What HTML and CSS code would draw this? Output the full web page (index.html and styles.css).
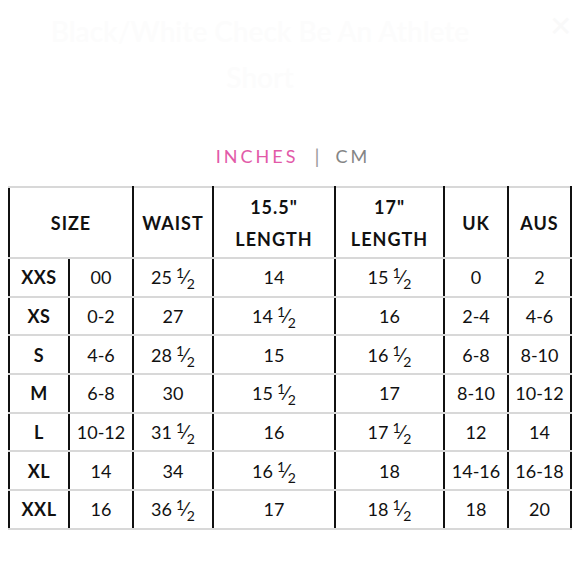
FILE: index.html
```html
<!DOCTYPE html>
<html>
<head>
<meta charset="utf-8">
<link rel="stylesheet" href="styles.css">
</head>
<body>
<div class="page">
  <div class="title">
    <div class="title-text">Black/White Check Be An Athlete<br>Short</div>
    <div class="close">✕</div>
  </div>
  <div class="units">
    <span class="unit active">INCHES</span>
    <span class="sep">|</span>
    <span class="unit">CM</span>
  </div>
  <table class="chart">
    <colgroup>
      <col class="c1"><col class="c2"><col class="c3"><col class="c4"><col class="c5"><col class="c6"><col class="c7">
    </colgroup>
    <thead>
      <tr>
        <th colspan="2">SIZE</th>
        <th>WAIST</th>
        <th>15.5"<br>LENGTH</th>
        <th>17"<br>LENGTH</th>
        <th>UK</th>
        <th>AUS</th>
      </tr>
    </thead>
    <tbody>
      <tr><td class="sz">XXS</td><td>00</td><td>25<span class="fr"><sup>1</sup>⁄<sub>2</sub></span></td><td>14</td><td>15<span class="fr"><sup>1</sup>⁄<sub>2</sub></span></td><td>0</td><td>2</td></tr>
      <tr><td class="sz">XS</td><td>0-2</td><td>27</td><td>14<span class="fr"><sup>1</sup>⁄<sub>2</sub></span></td><td>16</td><td>2-4</td><td>4-6</td></tr>
      <tr><td class="sz">S</td><td>4-6</td><td>28<span class="fr"><sup>1</sup>⁄<sub>2</sub></span></td><td>15</td><td>16<span class="fr"><sup>1</sup>⁄<sub>2</sub></span></td><td>6-8</td><td>8-10</td></tr>
      <tr><td class="sz">M</td><td>6-8</td><td>30</td><td>15<span class="fr"><sup>1</sup>⁄<sub>2</sub></span></td><td>17</td><td>8-10</td><td>10-12</td></tr>
      <tr><td class="sz">L</td><td>10-12</td><td>31<span class="fr"><sup>1</sup>⁄<sub>2</sub></span></td><td>16</td><td>17<span class="fr"><sup>1</sup>⁄<sub>2</sub></span></td><td>12</td><td>14</td></tr>
      <tr><td class="sz">XL</td><td>14</td><td>34</td><td>16<span class="fr"><sup>1</sup>⁄<sub>2</sub></span></td><td>18</td><td>14-16</td><td>16-18</td></tr>
      <tr><td class="sz">XXL</td><td>16</td><td>36<span class="fr"><sup>1</sup>⁄<sub>2</sub></span></td><td>17</td><td>18<span class="fr"><sup>1</sup>⁄<sub>2</sub></span></td><td>18</td><td>20</td></tr>
    </tbody>
  </table>
</div>
</body>
</html>
```
FILE: styles.css
```css
html, body {
  margin: 0;
  padding: 0;
  background: #ffffff;
}
body {
  font-family: "Lato", "Liberation Sans", sans-serif;
  color: #111;
}
.page {
  width: 580px;
  height: 580px;
  overflow: hidden;
}
.title {
  position: relative;
  padding-top: 8px;
  padding-right: 60px;
  height: 124px;
  box-sizing: border-box;
}
.title-text {
  text-align: center;
  font-size: 28px;
  line-height: 46px;
  color: #fcfcfc;
  font-weight: 600;
}
.close {
  position: absolute;
  right: 8px;
  top: 8px;
  font-size: 28px;
  color: #f9f9f9;
}
.units {
  display: flex;
  justify-content: center;
  align-items: center;
  gap: 16px;
  height: 62px;
  padding-left: 6px;
  box-sizing: border-box;
  padding-top: 2px;
  font-size: 18px;
  letter-spacing: 3px;
}
.unit.active {
  color: #e25aa8;
}
.unit {
  color: #858585;
}
.sep {
  color: #9a9a9a;
  letter-spacing: 0;
  font-size: 20px;
}
.chart {
  margin-left: 8px;
  width: 564px;
  border-collapse: collapse;
  table-layout: fixed;
}
.c1 { width: 60px; }
.c2 { width: 64px; }
.c3 { width: 80px; }
.c4 { width: 122px; }
.c5 { width: 109px; }
.c6 { width: 64px; }
.c7 { width: 63px; }
.chart th, .chart td {
  border-left: 2px solid #111;
  border-right: 2px solid #111;
  border-top: 2px solid #d8d8d8;
  border-bottom: 2px solid #d8d8d8;
  text-align: center;
  padding: 0;
}
.chart th {
  height: 69px;
  font-size: 18px;
  font-weight: 700;
  line-height: 32px;
  letter-spacing: 1px;
}
.chart td {
  height: 36.7px;
  font-size: 18px;
  font-weight: 400;
}
.chart td.sz {
  font-weight: 700;
  letter-spacing: 0.5px;
}
.fr {
  display: inline-block;
  margin-left: 4px;
  font-size: 20px;
  line-height: 1;
}
.fr sup, .fr sub {
  font-size: 14px;
  line-height: 0;
}
.fr sup {
  vertical-align: 6px;
}
.fr sub {
  vertical-align: -5px;
}
```
